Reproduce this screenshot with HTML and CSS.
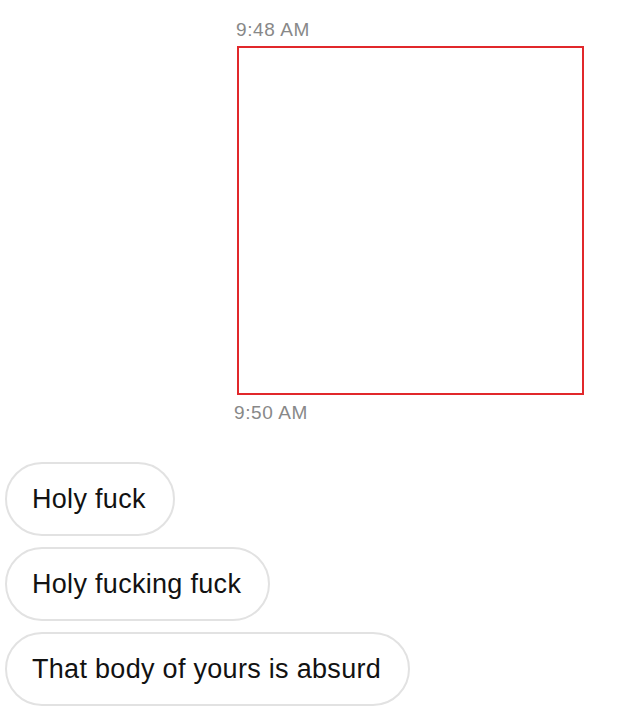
FILE: index.html
```html
<!DOCTYPE html>
<html lang="en">
<head>
<meta charset="utf-8">
<title>Chat</title>
<link rel="stylesheet" href="styles.css">
</head>
<body>
<main class="chat">
  <div class="stamp stamp-first">9:48 AM</div>
  <div class="media"></div>
  <div class="stamp stamp-second">9:50 AM</div>
  <div class="bubbles">
    <div class="bubble">Holy fuck</div>
    <div class="bubble">Holy fucking fuck</div>
    <div class="bubble">That body of yours is absurd</div>
  </div>
</main>
</body>
</html>
```
FILE: styles.css
```css
html, body {
  margin: 0;
  padding: 0;
  background: #ffffff;
}

.chat {
  display: flex;
  flex-direction: column;
  align-items: flex-start;
  padding-top: 19px;
  font-family: "Liberation Sans", Arial, sans-serif;
}

.stamp {
  font-size: 19px;
  line-height: 22px;
  letter-spacing: 0.6px;
  color: #888888;
}

.stamp-first {
  margin-left: 236px;
}

.stamp-second {
  margin-left: 234px;
  margin-top: 7px;
}

.media {
  box-sizing: border-box;
  margin-left: 237px;
  margin-top: 5px;
  width: 347px;
  height: 349px;
  border: 2px solid #e1282b;
  background: #ffffff;
}

.bubbles {
  display: flex;
  flex-direction: column;
  align-items: flex-start;
  gap: 11px;
  margin-top: 38px;
  margin-left: 5px;
}

.bubble {
  box-sizing: border-box;
  height: 74px;
  line-height: 70px;
  padding: 0 27px 0 25px;
  border: 2px solid #e2e2e2;
  border-radius: 37px;
  font-size: 27px;
  letter-spacing: 0.3px;
  color: #121212;
  white-space: nowrap;
}
```
